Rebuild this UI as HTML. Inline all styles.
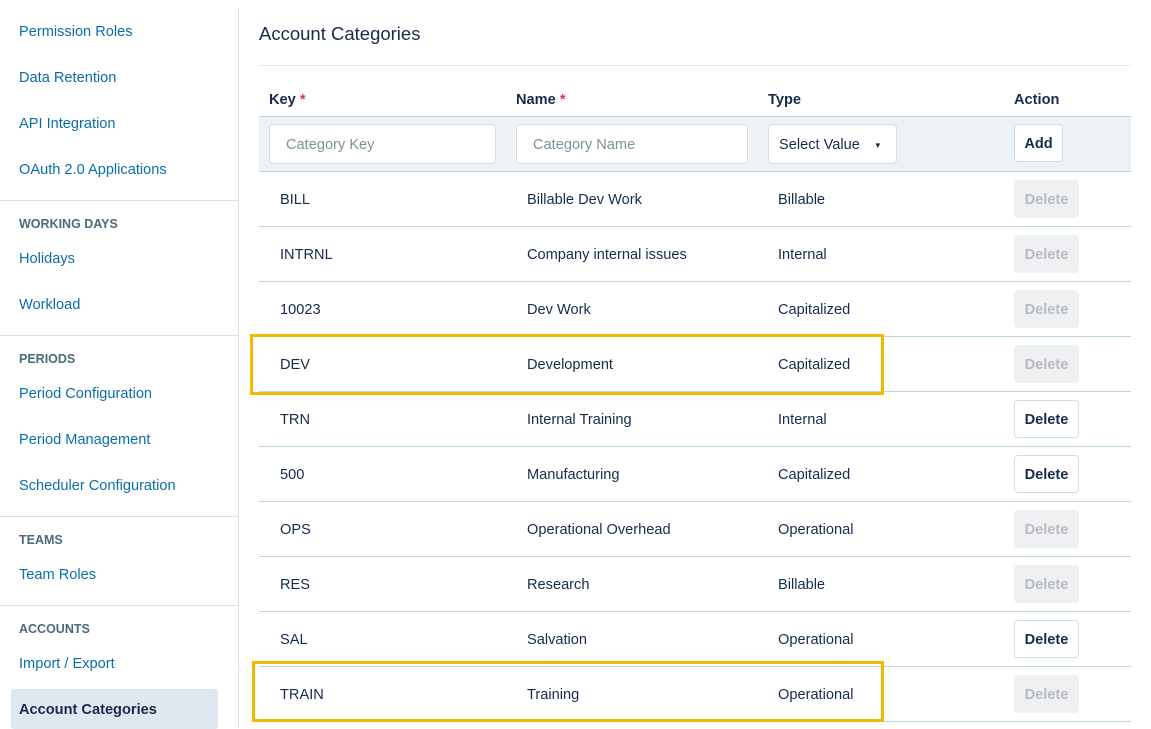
<!DOCTYPE html>
<html><head><style>
*{margin:0;padding:0;box-sizing:border-box}
body{width:1151px;height:727px;overflow:hidden;background:#fff;font-family:"Liberation Sans",sans-serif;font-size:14.6px;color:#172b4d;position:relative}
.a{position:absolute;white-space:nowrap;margin-top:2px}
.lk{color:#0b6ea8;font-size:14.6px;left:19px}
.hd{color:#4a6b78;font-size:12.5px;font-weight:bold;left:19px}
.sep{position:absolute;left:0;width:238px;height:1px;background:#d4e3ea}
.hl{position:absolute;left:259px;width:872px;height:1px;background:#b8d7e0}
.cell{position:absolute;font-size:14.6px;color:#172b4d;white-space:nowrap;margin-top:2px}
.btn{position:absolute;left:1014px;width:65px;height:38px;border-radius:4px;font-size:14.6px;font-weight:bold;display:flex;align-items:center;justify-content:center;padding-top:2px}
.dis{background:#eff0f2;color:#b8bcc2}
.en{background:#fff;border:1px solid #d5dde3;color:#172b4d}
.inp{position:absolute;top:124px;height:40px;background:#fff;border:1px solid #d5dde3;border-radius:4px;font-size:14.6px;display:flex;align-items:center;padding-left:16px;padding-top:2px;color:#7a939c;white-space:nowrap}
.box{position:absolute;border:3px solid #f5b800}
</style></head><body>
<div style="position:absolute;left:238px;top:9px;width:1px;height:718px;background:#d4e3ea"></div>
<div class="a lk" style="top:22px">Permission Roles</div>
<div class="a lk" style="top:68px">Data Retention</div>
<div class="a lk" style="top:114px">API Integration</div>
<div class="a lk" style="top:160px">OAuth 2.0 Applications</div>
<div class="sep" style="top:200px"></div>
<div class="a hd" style="top:215px">WORKING DAYS</div>
<div class="a lk" style="top:249px">Holidays</div>
<div class="a lk" style="top:295px">Workload</div>
<div class="sep" style="top:335px"></div>
<div class="a hd" style="top:350px">PERIODS</div>
<div class="a lk" style="top:384px">Period Configuration</div>
<div class="a lk" style="top:430px">Period Management</div>
<div class="a lk" style="top:476px">Scheduler Configuration</div>
<div class="sep" style="top:516px"></div>
<div class="a hd" style="top:531px">TEAMS</div>
<div class="a lk" style="top:565px">Team Roles</div>
<div class="sep" style="top:605px"></div>
<div class="a hd" style="top:620px">ACCOUNTS</div>
<div class="a lk" style="top:654px">Import / Export</div>
<div style="position:absolute;left:11px;top:689px;width:207px;height:40px;background:#dfe8f0;border-radius:3px"></div>
<div class="a" style="left:19px;top:700px;font-weight:bold;font-size:14.6px;color:#172b4d">Account Categories</div>

<div class="a" style="left:259px;top:21px;font-size:18.5px;color:#172b4d">Account Categories</div>
<div class="hl" style="top:65px;background:#dde8ec"></div>
<div class="a" style="left:269px;top:90px;font-weight:bold">Key <span style="color:#e0364a">*</span></div>
<div class="a" style="left:516px;top:90px;font-weight:bold">Name <span style="color:#e0364a">*</span></div>
<div class="a" style="left:768px;top:90px;font-weight:bold">Type</div>
<div class="a" style="left:1014px;top:90px;font-weight:bold">Action</div>
<div style="position:absolute;left:259px;top:116px;width:872px;height:55px;background:#edf2f6;border-top:1px solid #b8d7e0"></div>
<div class="inp" style="left:269px;width:227px">Category Key</div>
<div class="inp" style="left:516px;width:232px">Category Name</div>
<div class="inp" style="left:768px;width:129px;color:#172b4d;padding-left:10px">Select Value<span style="font-size:8px;margin-left:14px">▼</span></div>
<div class="btn en" style="top:124px;width:49px">Add</div>

<div class="hl" style="top:171px"></div>
<div class="cell" style="left:280px;top:190px">BILL</div><div class="cell" style="left:527px;top:190px">Billable Dev Work</div><div class="cell" style="left:778px;top:190px">Billable</div><div class="btn dis" style="top:180px">Delete</div>
<div class="hl" style="top:226px"></div>
<div class="cell" style="left:280px;top:245px">INTRNL</div><div class="cell" style="left:527px;top:245px">Company internal issues</div><div class="cell" style="left:778px;top:245px">Internal</div><div class="btn dis" style="top:235px">Delete</div>
<div class="hl" style="top:281px"></div>
<div class="cell" style="left:280px;top:300px">10023</div><div class="cell" style="left:527px;top:300px">Dev Work</div><div class="cell" style="left:778px;top:300px">Capitalized</div><div class="btn dis" style="top:290px">Delete</div>
<div class="hl" style="top:336px"></div>
<div class="cell" style="left:280px;top:355px">DEV</div><div class="cell" style="left:527px;top:355px">Development</div><div class="cell" style="left:778px;top:355px">Capitalized</div><div class="btn dis" style="top:345px">Delete</div>
<div class="hl" style="top:391px"></div>
<div class="cell" style="left:280px;top:410px">TRN</div><div class="cell" style="left:527px;top:410px">Internal Training</div><div class="cell" style="left:778px;top:410px">Internal</div><div class="btn en" style="top:400px">Delete</div>
<div class="hl" style="top:446px"></div>
<div class="cell" style="left:280px;top:465px">500</div><div class="cell" style="left:527px;top:465px">Manufacturing</div><div class="cell" style="left:778px;top:465px">Capitalized</div><div class="btn en" style="top:455px">Delete</div>
<div class="hl" style="top:501px"></div>
<div class="cell" style="left:280px;top:520px">OPS</div><div class="cell" style="left:527px;top:520px">Operational Overhead</div><div class="cell" style="left:778px;top:520px">Operational</div><div class="btn dis" style="top:510px">Delete</div>
<div class="hl" style="top:556px"></div>
<div class="cell" style="left:280px;top:575px">RES</div><div class="cell" style="left:527px;top:575px">Research</div><div class="cell" style="left:778px;top:575px">Billable</div><div class="btn dis" style="top:565px">Delete</div>
<div class="hl" style="top:611px"></div>
<div class="cell" style="left:280px;top:630px">SAL</div><div class="cell" style="left:527px;top:630px">Salvation</div><div class="cell" style="left:778px;top:630px">Operational</div><div class="btn en" style="top:620px">Delete</div>
<div class="hl" style="top:666px"></div>
<div class="cell" style="left:280px;top:685px">TRAIN</div><div class="cell" style="left:527px;top:685px">Training</div><div class="cell" style="left:778px;top:685px">Operational</div><div class="btn dis" style="top:675px">Delete</div>
<div class="hl" style="top:721px"></div>

<div class="box" style="left:250px;top:334px;width:634px;height:61px"></div>
<div class="box" style="left:252px;top:661px;width:632px;height:61px"></div>
</body></html>
